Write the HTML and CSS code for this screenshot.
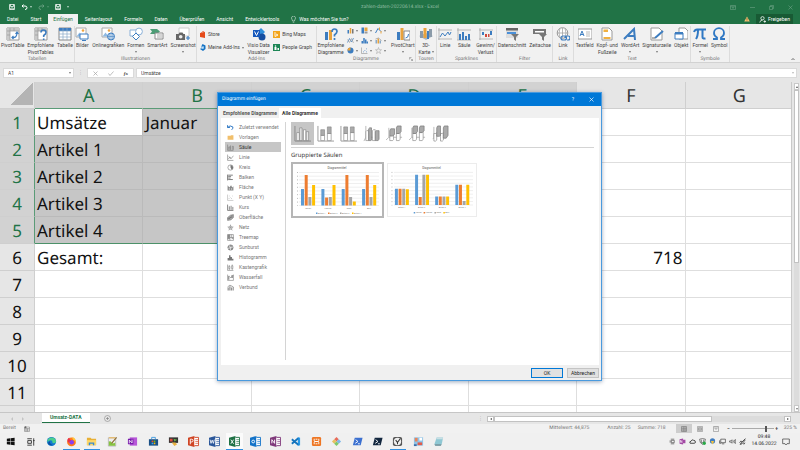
FILE: index.html
```html
<!DOCTYPE html>
<html lang="de">
<head>
<meta charset="utf-8">
<meta name="viewport" content="width=device-width, initial-scale=1">
<title>zahlen-daten-20220614.xlsx - Excel</title>
<link rel="stylesheet" href="styles.css">
</head>
<body>
<svg class="sprite" aria-hidden="true">
  <symbol id="save" viewBox="0 0 12 12"><path d="M1 1h10v10H1zM3 1v4h6V1M3.500 11V8h5v3" fill="none" stroke="#fff" stroke-width="1.500"/></symbol>
  <symbol id="docgrid" viewBox="0 0 14 14"><path d="M1 1h12v12H1z" fill="#fff" stroke="#999"/><path d="M1 1h12v3H1zM1 4h3v9H1z" fill="#c9c9c9"/><path d="M4 1v12M8 1v3M1 4h12M1 8h3" stroke="#999" stroke-width=".7"/></symbol>
  <symbol id="picture" viewBox="0 0 14 14"><path d="M1 1h10v9H1z" fill="#fff" stroke="#aaa"/><circle cx="8" cy="3.500" r="1.300" fill="#f0a33c"/><path d="M1.500 9.500l3-4 3 4z" fill="#8fb9e2"/></symbol>
  <symbol id="colbars" viewBox="0 0 14 14"><path d="M1 6h3v7H1z" fill="#3d7dc0"/><path d="M5.500 2h3v11h-3z" fill="#e9a23b"/><path d="M10 4h3v9h-3z" fill="#777"/></symbol>
  <symbol id="letterbox" viewBox="0 0 12 12"><path d="M0 2l7-2v12l-7-2z"/><path d="M7 1.500h4.500v9H7" fill="#fff" stroke="currentColor"/><path d="M8 4h3M8 6h3M8 8h3" stroke="currentColor" stroke-width=".7"/></symbol>
</svg>

<header class="top">
  <div class="titlebar">
    <div class="qat">
      <button aria-label="Speichern"><svg width="6" height="6"><use href="#save"/></svg></button>
      <button aria-label="Rückgängig"><svg width="7" height="6" viewBox="0 0 14 12"><path d="M5 1L2 4l3 3M2 4h6q4 0 4 3.500T8 11" fill="none" stroke="#fff" stroke-width="2"/></svg><i class="caret"></i></button>
      <button class="dim" aria-label="Wiederholen"><svg width="7" height="6" viewBox="0 0 14 12"><path d="M9 1l3 3-3 3M12 4H6Q2 4 2 7.500T6 11" fill="none" stroke="#fff" stroke-width="2"/></svg><i class="caret"></i></button>
      <button aria-label="Speichern unter"><svg width="6" height="6"><use href="#save"/></svg></button>
      <button aria-label="Anpassen"><i class="caret"></i></button>
    </div>
    <h1 class="doc-title">zahlen-daten-20220614.xlsx - Excel</h1>
    <div class="winbtns">
      <button aria-label="Menüband"><svg width="6" height="5" viewBox="0 0 12 10"><path d="M1 1h10v8H1zM1 3.500h10M6 5v3M4.500 6L6 4.500 7.500 6" fill="none" stroke="#fff"/></svg></button>
      <button aria-label="Minimieren"><svg width="5" height="5" viewBox="0 0 10 10"><path d="M0 5h10" stroke="#fff"/></svg></button>
      <button aria-label="Wiederherstellen"><svg width="5" height="5" viewBox="0 0 10 10"><path d="M1 3h6v6H1zM3 3V1h6v6H7" fill="none" stroke="#fff"/></svg></button>
      <button aria-label="Schließen"><svg width="5" height="5" viewBox="0 0 10 10"><path d="M1 1l8 8M9 1L1 9" stroke="#fff"/></svg></button>
    </div>
  </div>
  <nav class="tabs">
    <button>Datei</button><button>Start</button><button class="active">Einfügen</button><button>Seitenlayout</button><button>Formeln</button><button>Daten</button><button>Überprüfen</button><button>Ansicht</button><button>Entwicklertools</button>
    <button class="tell"><svg width="5" height="7" viewBox="0 0 10 14"><path d="M3 10Q3 8 1.800 6.500A4 4 0 1 1 8.200 6.500Q7 8 7 10zM3.500 12.500h3" fill="none" stroke="#fff"/></svg>Was möchten Sie tun?</button>
    <span class="warn"><svg width="6" height="6" viewBox="0 0 12 12"><path d="M6 1l5.500 10H.5z" fill="#f3c277"/><path d="M6 4v4M6 9v1.300" stroke="#6b4a12" stroke-width="1.300"/></svg></span>
    <button class="share"><svg width="7" height="7" viewBox="0 0 14 14"><circle cx="7" cy="4.500" r="3.300" fill="none" stroke="#fff" stroke-width="1.500"/><path d="M1.500 13q1-5 5.500-5M9 11h5M11.500 8.500v5" fill="none" stroke="#fff" stroke-width="1.500"/></svg>Freigeben</button>
  </nav>
</header>

<section class="ribbon" aria-label="Einfügen">
  <div class="group">
    <div class="items">
      <button class="big"><svg viewBox="0 0 14 14"><use href="#docgrid"/><path d="M6 10.500q5 1 5-5M9.500 7L11 5l1.500 2M7.500 9L6 10.500 7.500 12" fill="none" stroke="#3d7dc0" stroke-width="1.200"/></svg>PivotTable</button>
      <button class="big"><svg viewBox="0 0 14 14"><use href="#docgrid"/><path d="M7 5.500Q7 3 9.500 3T12 5.500Q12 7 9.700 8.500V10M9.700 11.500V13" fill="none" stroke="#3d7dc0" stroke-width="1.600"/></svg>Empfohlene<br>PivotTables</button>
      <button class="big"><svg viewBox="0 0 14 14"><path d="M1 1h12v12H1z" fill="#fff" stroke="#888"/><path d="M1 1h12v3H1z" fill="#3d7dc0"/><path d="M5 1v12M9 1v12M1 4h12M1 7h12M1 10h12" stroke="#8aa9c8" stroke-width=".7"/></svg>Tabelle</button>
    </div>
    <h2>Tabellen</h2>
  </div>
  <div class="group">
    <div class="items">
      <button class="big"><svg viewBox="0 0 14 14"><use href="#picture"/><path d="M5 7h8v5H5z" fill="#fff" stroke="#3d7dc0"/><path d="M7 13.500h4" stroke="#3d7dc0"/></svg>Bilder</button>
      <button class="big"><svg viewBox="0 0 14 14"><use href="#picture"/><circle cx="10" cy="9.500" r="3.500" fill="#e4eef8" stroke="#3d7dc0"/><path d="M6.500 9.500h7M10 6v7M8.500 6.500q-1 3 0 6M11.500 6.500q1 3 0 6" fill="none" stroke="#3d7dc0" stroke-width=".6"/></svg>Onlinegrafiken</button>
      <button class="big"><svg viewBox="0 0 14 14"><path d="M1 3h7v6H1z" fill="#fff" stroke="#8ab0d8"/><circle cx="10" cy="4.500" r="3.400" fill="#fff" stroke="#8ab0d8"/><path d="M7 6l3.500 3.500L7 13l-3.500-3.500z" fill="#fff" stroke="#3d7dc0"/></svg>Formen<i class="caret"></i></button>
      <button class="big"><svg viewBox="0 0 14 14"><path d="M0 2h7l3 2.500L7 7H0l2-2.500z" fill="#4d9d76"/><path d="M5 6h8v6H5z" fill="#fff" stroke="#888"/><path d="M7 8h5M7 10h5" stroke="#888" stroke-width=".7"/></svg>SmartArt</button>
      <button class="big"><svg viewBox="0 0 14 14"><path d="M3 1h10v8H3z" fill="#fff" stroke="#ccc"/><path d="M0 7h2.500l1-1.500h3L7.500 7H9v6H0z" fill="#666"/><circle cx="4.700" cy="9.800" r="1.800" fill="#eee"/><path d="M12 9v4M10 11h4" stroke="#3d7dc0" stroke-width="1.200"/></svg>Screenshot<i class="caret"></i></button>
    </div>
    <h2>Illustrationen</h2>
  </div>
  <div class="group">
    <div class="items addins">
      <div class="stack">
        <button class="line"><svg width="6" height="7" viewBox="0 0 12 14"><path d="M0 4l10-2v12L0 12z" fill="#e64a19"/><path d="M3 4Q4 0 8 1.500L8 5" fill="none" stroke="#e64a19" stroke-width="1.500"/></svg>Store</button>
        <button class="line"><svg width="6" height="7" viewBox="0 0 12 14"><path d="M5 0l6 3v7l-5 4-6-4 3-2V4z" fill="#1472c4"/><path d="M3 6l4-2 1 5-5 1z" fill="#bfe0f5"/></svg>Meine Add-Ins <i class="caret"></i></button>
      </div>
      <button class="big"><svg viewBox="0 0 14 14"><path d="M9 1l4 4-4 4-4-4z" fill="#2f8fdb"/><circle cx="10" cy="10" r="3.500" fill="#164fa0"/><path d="M1 3h7v7H1z" fill="#185abd"/><path d="M2.500 4.500l2 4 2-4" fill="none" stroke="#fff"/></svg>Visio Data<br>Visualizer</button>
      <div class="stack">
        <button class="line"><svg width="7" height="7" viewBox="0 0 14 14"><path d="M0 0h14v14H0z" fill="#f3a51c"/><path d="M4 2v9l6-3-4-2" fill="none" stroke="#fff" stroke-width="1.700"/></svg>Bing Maps</button>
        <button class="line"><svg width="7" height="7" viewBox="0 0 14 14"><path d="M0 0h14v14H0z" fill="#1d8655"/><circle cx="5" cy="4" r="1.500" fill="#fff"/><path d="M3 6h4v6H3zM9 8h3v4H9z" fill="#fff"/></svg>People Graph</button>
      </div>
    </div>
    <h2>Add-Ins</h2>
  </div>
  <div class="group">
    <div class="items">
      <button class="big"><svg viewBox="0 0 14 14"><path d="M1 5h3v8H1z" fill="#3d7dc0"/><path d="M5 3h3v10H5z" fill="#e9a23b"/><path d="M8 5Q8 2 10.500 2T13 4.500Q13 6 10.500 8v1.500M10.500 11v2" fill="none" stroke="#3d7dc0" stroke-width="1.700"/></svg>Empfohlene<br>Diagramme</button>
      <div class="minis">
        <button aria-label="Säule"><svg viewBox="0 0 14 14"><use href="#colbars"/></svg><i class="caret"></i></button>
        <button aria-label="Hierarchie"><svg viewBox="0 0 14 14"><path d="M1 1h5v12H1z" fill="#3d7dc0"/><path d="M7 1h6v7H7z" fill="#e9a23b"/><path d="M7 9h6v4H7z" fill="#999"/></svg><i class="caret"></i></button>
        <button aria-label="Wasserfall"><svg viewBox="0 0 14 14"><path d="M1 12L6 3l6 6" fill="none" stroke="#3d7dc0" stroke-width="2"/><path d="M9 1v5M12 8v5" stroke="#e9a23b" stroke-width="2"/></svg><i class="caret"></i></button>
        <button aria-label="Linie"><svg viewBox="0 0 14 14"><path d="M1 11L5 3l4 7 4-8" fill="none" stroke="#3d7dc0" stroke-width="1.500"/><path d="M1 5l4 6 4-8 4 9" fill="none" stroke="#999" stroke-width="1.200"/></svg><i class="caret"></i></button>
        <button aria-label="Statistik"><svg viewBox="0 0 14 14"><path d="M1 8h3v5H1zM4.500 2h3v11h-3zM8 5h3v8H8zM11.500 9H14v4h-2.500z" fill="#3d7dc0"/></svg><i class="caret"></i></button>
        <button aria-label="Verbund"><svg viewBox="0 0 14 14"><path d="M1 6h3v7H1zM9 7h3v6H9z" fill="#8aa9c8"/><path d="M5 3h3v10H5z" fill="#e9a23b"/><path d="M1 4l6-2 6 5" fill="none" stroke="#777"/></svg><i class="caret"></i></button>
        <button aria-label="Kreis"><svg viewBox="0 0 14 14"><circle cx="7" cy="7" r="6" fill="#3d7dc0"/><path d="M7 7V1a6 6 0 0 0-6 6z" fill="#e9a23b"/></svg><i class="caret"></i></button>
        <button aria-label="Punkt"><svg viewBox="0 0 14 14"><path d="M1 1v12h12" fill="none" stroke="#999" stroke-width="1.300"/><path d="M4 9h1.500v1.500H4zM7 6h1.500v1.500H7zM10 9h1.500v1.500H10zM10 3h1.500v1.500H10z" fill="#3d7dc0"/></svg><i class="caret"></i></button>
        <button aria-label="Netz"><svg viewBox="0 0 14 14"><path d="M7 1l1.500 4.500H13L9.500 8.500 11 13 7 10.500 3 13l1.500-4.500L1 5.500h4.500z" fill="none" stroke="#aaa" stroke-width="1.200"/></svg><i class="caret"></i></button>
      </div>
      <button class="big"><svg viewBox="0 0 14 14"><path d="M1 5h3v8H1z" fill="#3d7dc0"/><path d="M4.500 1h3v12h-3z" fill="#e9a23b"/><path d="M8 4h6v9H8z" fill="#fff" stroke="#888"/><path d="M9.500 11q3 0 3-4" fill="none" stroke="#3d7dc0"/></svg>PivotChart<i class="caret"></i></button>
    </div>
    <h2>Diagramme</h2><button class="launcher" aria-label="Optionen"><svg width="4" height="4" viewBox="0 0 8 8"><path d="M1 5V1h4M3 3l4 4M7 4v3H4" fill="none" stroke="#777"/></svg></button>
  </div>
  <div class="group">
    <div class="items">
      <button class="big"><svg viewBox="0 0 14 14"><path d="M0 9l7-3 7 3-7 4z" fill="#aab6c0"/><path d="M1 4h3v7H1zM10 2h3v8h-3z" fill="#8a9aa8"/><path d="M4.500 1h3v10h-3z" fill="#e9a23b"/><path d="M8 4h2v8H8z" fill="#3d7dc0"/></svg>3D-<br>Karte <i class="caret"></i></button>
    </div>
    <h2>Touren</h2>
  </div>
  <div class="group">
    <div class="items wide">
      <button class="big"><svg viewBox="0 0 14 14"><path d="M1 1v12M0 3h14M0 12h14" stroke="#aaa" stroke-width=".8"/><path d="M2 10l2.500-4L7 9l3-4 1.500 3L13 5" fill="none" stroke="#3d7dc0"/></svg>Linie</button>
      <button class="big"><svg viewBox="0 0 14 14"><path d="M0 3h14M0 13h14M1 1v12" stroke="#aaa" stroke-width=".8"/><path d="M2 7h2v6H2zM5 5h2v8H5zM8 9h2v4H8zM11 7h2v6h-2z" fill="#3d7dc0"/></svg>Säule</button>
      <button class="big"><svg viewBox="0 0 14 14"><path d="M0 3h14M0 12h14M1 1v12" stroke="#aaa" stroke-width=".8"/><path d="M3 5h2v3H3zM11 4h2v4h-2z" fill="#3d7dc0"/><path d="M6 7h2v3H6zM9 7h1.500v3H9z" fill="#d0483c"/></svg>Gewinn/<br>Verlust</button>
    </div>
    <h2>Sparklines</h2>
  </div>
  <div class="group">
    <div class="items">
      <button class="big"><svg viewBox="0 0 14 14"><path d="M1 1h12v10H1z" fill="#ddd"/><path d="M1 1h12v2.500H1z" fill="#666"/><path d="M2 5h9v2H2z" fill="#4a90d9"/><path d="M6 7h8l-3 3v4l-2-1.500V10z" fill="#777"/></svg>Datenschnitt</button>
      <button class="big"><svg viewBox="0 0 14 14"><path d="M0 2h13v5H0z" fill="#777"/><path d="M2 4h9v1.500H2z" fill="#fff"/><path d="M6 7h8l-3 3v4l-2-1.500V10z" fill="#777"/></svg>Zeitachse</button>
    </div>
    <h2>Filter</h2>
  </div>
  <div class="group">
    <div class="items">
      <button class="big"><svg viewBox="0 0 14 14"><circle cx="6.500" cy="6" r="5.300" fill="#fff" stroke="#999"/><path d="M1 6h11M6.500 1v10M4 1.500q-2 4.500 0 9M9 1.500q2 4.500 0 9" fill="none" stroke="#999" stroke-width=".7"/><path d="M5 11q0-2 2-2h1.500q2 0 2 2t-2 2H7q-2 0-2-2zM9 11q0-2 2-2h1q2 0 2 2t-2 2h-1" fill="none" stroke="#3d7dc0" stroke-width="1.200"/></svg>Link</button>
    </div>
    <h2>Link</h2>
  </div>
  <div class="group">
    <div class="items">
      <button class="big"><svg viewBox="0 0 14 14"><path d="M0 2h14v10H0z" fill="#fff" stroke="#999"/><path d="M2 9l2-5 2 5M2.700 7.500h2.600" fill="none" stroke="#3d7dc0"/><path d="M8 5h4M8 7h4M8 9h4" stroke="#aaa" stroke-width=".8"/></svg>Textfeld</button>
      <button class="big"><svg viewBox="0 0 14 14"><path d="M2 1h7l3 3v9H2z" fill="#fff" stroke="#999"/><path d="M3.500 2.500H8v2.500H3.500zM3.500 10h7v2h-7z" fill="#f0b040"/></svg>Kopf- und<br>Fußzeile</button>
      <button class="big"><svg viewBox="0 0 14 14"><path d="M1 12L11 2l1 11M5 9h7" fill="none" stroke="#3d7dc0" stroke-width="2"/></svg>WordArt<i class="caret"></i></button>
      <button class="big"><svg viewBox="0 0 14 14"><path d="M1 1h8l3 3v9H1z" fill="#fff" stroke="#999"/><path d="M5 11l8-7" stroke="#3d7dc0" stroke-width="2"/><path d="M2 11h3" stroke="#666"/></svg>Signaturzeile<i class="caret"></i></button>
      <button class="big"><svg viewBox="0 0 14 14"><path d="M5 1h6l3 3v8H5z" fill="#fff" stroke="#999"/><path d="M1 6h8v6H1z" fill="#fff" stroke="#3d7dc0"/><path d="M1 5h8v2.500H1z" fill="#3d7dc0"/></svg>Objekt</button>
    </div>
    <h2>Text</h2>
  </div>
  <div class="group">
    <div class="items">
      <button class="big"><svg viewBox="0 0 14 14"><path d="M1 5q1-2.500 3-2.500h9M5 3q0 6-2 9M9.500 3v7q0 2 3 1.500" fill="none" stroke="#2f78c4" stroke-width="2"/></svg>Formel<i class="caret"></i></button>
      <button class="big"><svg viewBox="0 0 14 14"><path d="M1 12h4v-1.500Q2 9 2 6a5 4.800 0 0 1 10 0q0 3-3 4.500V12h4" fill="none" stroke="#2f78c4" stroke-width="1.800"/></svg>Symbol</button>
    </div>
    <h2>Symbole</h2>
  </div>
  <div class="group last"><button class="launcher" aria-label="Menüband reduzieren"><svg width="4" height="4" viewBox="0 0 8 8"><path d="M1 6l3-3 3 3" fill="none" stroke="#444" stroke-width="1.500"/></svg></button></div>
</section>

<div class="formulabar">
  <div class="namebox"><input aria-label="Namenfeld" value="A1"><i class="caret"></i></div>
  <span class="dots">⋮</span>
  <div class="fx">
    <button aria-label="Abbrechen"><svg width="5" height="5" viewBox="0 0 10 10"><path d="M1 1l8 8M9 1L1 9" stroke="#aaa" stroke-width="1.500"/></svg></button>
    <button aria-label="Eingeben"><svg width="6" height="5" viewBox="0 0 12 10"><path d="M1 5l3 4 7-8" fill="none" stroke="#aaa" stroke-width="1.500"/></svg></button>
    <button class="fxb"><i>f</i>x</button>
  </div>
  <div class="formula"><input aria-label="Bearbeitungsleiste" value="Umsätze"><i class="caret pale"></i></div>
</div>

<main class="sheet">
  <div class="gridwrap">
    <table class="grid">
      <colgroup><col class="rowcol"><col><col><col><col><col><col><col></colgroup>
      <thead><tr><th class="corner"></th><th class="on">A</th><th class="on">B</th><th class="on">C</th><th class="on">D</th><th class="on">E</th><th>F</th><th>G</th></tr></thead>
      <tbody>
        <tr class="sel"><th>1</th><td class="cur">Umsätze</td><td>Januar</td><td></td><td></td><td></td><td></td><td></td></tr>
        <tr class="sel"><th>2</th><td>Artikel 1</td><td></td><td></td><td></td><td></td><td></td><td></td></tr>
        <tr class="sel"><th>3</th><td>Artikel 2</td><td></td><td></td><td></td><td></td><td></td><td></td></tr>
        <tr class="sel"><th>4</th><td>Artikel 3</td><td></td><td></td><td></td><td></td><td></td><td></td></tr>
        <tr class="sel end"><th>5</th><td>Artikel 4</td><td></td><td></td><td></td><td></td><td></td><td></td></tr>
        <tr><th>6</th><td>Gesamt:</td><td></td><td></td><td></td><td></td><td class="num">718</td><td></td></tr>
        <tr><th>7</th><td></td><td></td><td></td><td></td><td></td><td></td><td></td></tr>
        <tr><th>8</th><td></td><td></td><td></td><td></td><td></td><td></td><td></td></tr>
        <tr><th>9</th><td></td><td></td><td></td><td></td><td></td><td></td><td></td></tr>
        <tr><th>10</th><td></td><td></td><td></td><td></td><td></td><td></td><td></td></tr>
        <tr><th>11</th><td></td><td></td><td></td><td></td><td></td><td></td><td></td></tr>
        <tr><th></th><td></td><td></td><td></td><td></td><td></td><td></td><td></td></tr>
      </tbody>
    </table>
  </div>
  <div class="vscroll"><button aria-label="Nach oben"><i class="up"></i></button><div class="vthumb"></div><div class="vtrack"></div><button aria-label="Nach unten"><i class="caret"></i></button></div>
</main>

<div class="sheetbar">
  <span class="navs"><i class="leftt"></i><i class="rightt"></i></span>
  <button class="sheettab">Umsatz-DATA</button>
  <button class="plus" aria-label="Neues Blatt"><svg width="7" height="7" viewBox="0 0 14 14"><circle cx="7" cy="7" r="6" fill="none" stroke="#777"/><path d="M7 4v6M4 7h6" stroke="#777" stroke-width="1.200"/></svg></button>
  <span class="dots">⋮</span>
  <div class="hscroll"><button aria-label="Nach links"><i class="leftt dark"></i></button><div class="hthumb"></div><div class="htrack"></div><button aria-label="Nach rechts"><i class="rightt dark"></i></button></div>
</div>

<div class="status">
  <span>Bereit</span>
  <svg class="rec" width="6" height="6" viewBox="0 0 12 12"><path d="M1 2h10v9H1zM1 5h10M4 5v6M7 5v6M1 8h10" fill="none" stroke="#777"/><circle cx="3" cy="2.500" r="2" fill="#666"/></svg>
  <span class="mw">Mittelwert: 44,875</span><span class="az">Anzahl: 25</span><span class="sm">Summe: 718</span>
  <button class="view on" aria-label="Normal"><svg width="6" height="6" viewBox="0 0 12 12"><path d="M1 1h10v10H1zM4.500 1v10M8 1v10M1 4.500h10M1 8h10" fill="none" stroke="#666"/></svg></button>
  <button class="view" aria-label="Seitenlayout"><svg width="6" height="6" viewBox="0 0 12 12"><path d="M1 1h10v10H1zM3 3h6v6H3zM3 5h6M3 7h6" fill="none" stroke="#777"/></svg></button>
  <button class="view" aria-label="Umbruchvorschau"><svg width="6" height="6" viewBox="0 0 12 12"><path d="M1 1h10v10H1zM4 1v5h4V1" fill="none" stroke="#777"/></svg></button>
  <button class="zb">−</button><input class="zoom" type="range" min="10" max="400" value="335" aria-label="Zoom"><button class="zb">+</button>
  <span class="pct">325 %</span>
</div>

<footer class="taskbar">
  <div class="apps">
    <button aria-label="Start"><svg viewBox="0 0 12 12"><path d="M2 3l3.700-.5v3.200H2zM6.200 2.400L10.500 2v3.700H6.200zM2 6.300h3.700v3.200L2 9zM6.200 6.300h4.300V10l-4.300-.5z" fill="#111"/></svg></button>
    <button aria-label="Taskansicht"><svg viewBox="0 0 12 12"><path d="M3 5h4v3H3zM2.500 3h5M2.500 10h5M9.500 2.500v8M9 5h1.500" fill="none" stroke="#222" stroke-width=".9"/></svg></button>
    <button aria-label="Edge"><svg viewBox="0 0 12 12"><circle cx="6" cy="6" r="5" fill="#1479cf"/><path d="M1.500 4.500A5 5 0 0 1 11 6q0 2-2.500 2Q6.500 8 7 6.500 7.300 4.500 5 4.500q-2.500 0-3.500 2.500z" fill="#4ccf8c"/><path d="M4.500 5.500q-1 3 3 4.500Q3 11 2 7.500z" fill="#0c4f9e"/></svg></button>
    <button class="run" aria-label="Firefox"><svg viewBox="0 0 12 12"><circle cx="6" cy="6.500" r="4.800" fill="#ff7a1e"/><circle cx="6.200" cy="6.800" r="2.500" fill="#8a3ff0"/><path d="M1.500 4q1-2 2-2 0 2 2 2.500-2 1-2 3Q1 6 1.500 4z" fill="#e8304a"/><path d="M7 1q4 1.500 3.800 6-1-2.500-3-3Q6.500 3 7 1z" fill="#ffc93c"/></svg></button>
    <button class="run" aria-label="Explorer"><svg viewBox="0 0 12 12"><path d="M1 2h4l1 1h5v7H1z" fill="#e8b036"/><path d="M1 4.500h10V10H1z" fill="#ffd767"/><path d="M3 7h6v3H7.500V8.500h-3V10H3z" fill="#3a8bd0"/></svg></button>
    <button aria-label="Notepad++"><svg viewBox="0 0 12 12"><path d="M1.500 2h8v9h-8z" fill="#eee" stroke="#999" stroke-width=".6"/><path d="M2 6q2-1 3 1t4 0v3.500H2z" fill="#86c440"/><path d="M10.500 1.500L5 8" stroke="#8a6a30" stroke-width="1.200"/><path d="M2 2h7" stroke="#f0b040"/></svg></button>
    <button aria-label="OneNote"><svg viewBox="0 0 12 12"><path d="M3 1.500h8v9H3z" fill="#b757d8"/><path d="M1 3h6v6H1z" fill="#7719aa"/><path d="M2.500 8V4.500l3 3V4" fill="none" stroke="#fff" stroke-width=".9"/></svg></button>
    <button aria-label="Store"><svg viewBox="0 0 12 12"><path d="M1 3.500h10v7H1z" fill="#194f86"/><path d="M4 3.500v-2h4v2" fill="none" stroke="#3f9be0"/><path d="M4 5h1.700v1.700H4z" fill="#f25022"/><path d="M6.300 5H8v1.700H6.300z" fill="#7fba00"/><path d="M4 7.300h1.700V9H4z" fill="#35a8f0"/><path d="M6.300 7.300H8V9H6.300z" fill="#ffb900"/></svg></button>
    <button aria-label="Monitor"><svg viewBox="0 0 12 12"><path d="M1 1.500h10v6H1z" fill="#333"/><path d="M2 3h3v3H2z" fill="#e14b3d"/><path d="M6 3l4 1-3 2z" fill="#6ab04a"/><path d="M4 7h4l2 2-3 2z" fill="#e8b040"/></svg></button>
    <button class="pp" aria-label="PowerPoint"><svg viewBox="0 0 12 12"><use href="#letterbox"/><path d="M2.500 9V3.500H4a1.500 1.500 0 0 1 0 3H2.500" fill="none" stroke="#fff"/></svg></button>
    <button class="wd" aria-label="Word"><svg viewBox="0 0 12 12"><use href="#letterbox"/><path d="M1.200 4l1 4 1.300-3.500L4.800 8l1-4" fill="none" stroke="#fff" stroke-width=".9"/></svg></button>
    <button class="xl run hl" aria-label="Excel"><svg viewBox="0 0 12 12"><use href="#letterbox"/><path d="M2 4l3 4.500M5 4L2 8.500" stroke="#fff"/></svg></button>
    <button class="ol" aria-label="Outlook"><svg viewBox="0 0 12 12"><use href="#letterbox"/><circle cx="3.500" cy="6" r="1.500" fill="none" stroke="#fff"/></svg></button>
    <button class="on16" aria-label="OneNote 2016"><svg viewBox="0 0 12 12"><use href="#letterbox"/><path d="M2 8V4l3 4V4" fill="none" stroke="#fff"/></svg></button>
    <button aria-label="Visual Studio Code"><svg viewBox="0 0 12 12"><path d="M8.500 1L11 2v8l-2.500 1z" fill="#2a9ae8"/><path d="M9 2.500L2 8.500M9 9.500L2 3.500" stroke="#1574bd" stroke-width="2"/></svg></button>
    <button aria-label="XAMPP"><svg viewBox="0 0 12 12"><rect x="1" y="1" width="10" height="10" rx="1.500" fill="#ee7623"/><path d="M3.500 3v2q0 1 1 1h3q1 0 1-1V3M3.500 9V7q0-1 1-1h3q1 0 1 1v2M5 3.500h2M5 8.500h2" fill="none" stroke="#fff"/></svg></button>
    <button aria-label="Git GUI"><svg viewBox="0 0 12 12"><path d="M6 1l2.500 2.500L6 6 3.500 3.500z" fill="#e86b5a"/><path d="M8.500 3.500L11 6 8.500 8.500 6 6z" fill="#7fb8e8"/><path d="M3.500 3.500L6 6 3.500 8.500 1 6z" fill="#e8c060"/><path d="M6 6l2.500 2.500L6 11 3.500 8.500z" fill="#7ec86a"/></svg></button>
    <button aria-label="PowerShell ISE"><svg viewBox="0 0 12 12"><path d="M3 2h8.500L9.500 10H1z" fill="#3c70d0"/><path d="M4 4l2.500 2L3.500 8M6.500 8.500h2" fill="none" stroke="#fff"/></svg></button>
    <button aria-label="PowerShell"><svg viewBox="0 0 12 12"><path d="M3 2h8.500L9.500 10H1z" fill="#12263e"/><path d="M4 4l2.500 2L3.500 8M6.500 8.500h2" fill="none" stroke="#fff"/></svg></button>
    <button class="run" aria-label="Aufgaben"><svg viewBox="0 0 12 12"><rect x="1" y="1" width="10" height="10" rx="2" fill="#555"/><circle cx="6" cy="6" r="4" fill="#eee"/><path d="M4 4.500L6 7l3-4M6 7v2" fill="none" stroke="#333" stroke-width="1.100"/></svg></button>
    <button aria-label="Speicher"><svg viewBox="0 0 12 12"><path d="M1 1.500h10v9H1z" fill="#8fc4e8"/><path d="M2 2h3v4H2z" fill="#e8845a"/><path d="M5 7h5v3H5z" fill="#e25b4a"/><path d="M7 2h3v3H7z" fill="#fff"/><path d="M1 9h3v2H1z" fill="#3b6fa8"/></svg></button>
    <button aria-label="Notizen"><svg viewBox="0 0 12 12"><path d="M4 1.500h7L9.500 9H1.500z" fill="#8fc8d4"/><path d="M4 1.500h7l-.5 2H3.500z" fill="#c9dfe4"/><path d="M1.500 9h8l-1 1.500h-6z" fill="#5f8a94"/></svg></button>
  </div>
  <div class="tray">
    <svg viewBox="0 0 12 12"><path d="M3 2h6M3 10h6M4 4h5v4H4zM2 4v4" fill="none" stroke="#333"/></svg>
    <svg viewBox="0 0 12 12"><path d="M1 2l6-1v10l-6-1zM7 3h4v6H7" fill="#a349a4"/><path d="M2.500 8V4L5 8V4" fill="none" stroke="#fff"/></svg>
    <svg viewBox="0 0 12 12"><path d="M2 9Q0 6 3.500 5.500 5 1.500 8 4q3 0 3 3 0 2-2 2z" fill="none" stroke="#333" stroke-width="1.500"/></svg>
    <svg viewBox="0 0 12 12"><path d="M1 2l5-1 5 1q0 7-5 9-5-2-5-9z" fill="none" stroke="#333"/><path d="M4 3v5h4V3" fill="none" stroke="#333"/><circle cx="9" cy="9" r="2.800" fill="#28a745"/></svg>
    <svg viewBox="0 0 12 12"><circle cx="6" cy="5" r="4.500" fill="#3f7dc0"/><path d="M3 5h6l-3 6z" fill="#f0c040"/></svg>
    <svg viewBox="0 0 12 12"><path d="M3 2h8v6H3zM5 10h4M1 4v5h3" fill="none" stroke="#333" stroke-width="1.100"/></svg>
    <svg viewBox="0 0 12 12"><path d="M1 5h2l2-2v6L3 7H1zM7 4q1 2 0 4M9 3q1.500 3 0 6M11 2q1.500 4 0 8" fill="none" stroke="#333"/></svg>
    <svg viewBox="0 0 12 12"><path d="M11 1L4 8l-2 3 3-1 6-7M1 8q2-4 4-2M7 10q3 1 3-2" fill="none" stroke="#222" stroke-width="1.300"/></svg>
  </div>
  <time class="clock">09:48<br>14.06.2022</time>
  <button class="notif" aria-label="Benachrichtigungen"><svg width="8" height="8" viewBox="0 0 12 12"><path d="M1 1.500h10v7H7.500L6 10.500 4.500 8.500H1z" fill="none" stroke="#333"/></svg></button>
</footer>

<section class="dialog" role="dialog" aria-label="Diagramm einfügen">
  <header class="dhead"><span>Diagramm einfügen</span><button aria-label="Hilfe">?</button><button aria-label="Schließen"><svg width="5" height="5" viewBox="0 0 10 10"><path d="M1 1l8 8M9 1L1 9" stroke="#fff" stroke-width="1.300"/></svg></button></header>
  <nav class="dtabs"><button>Empfohlene Diagramme</button><button class="active">Alle Diagramme</button></nav>
  <div class="dbody">
    <div class="kinds">
      <button><svg viewBox="0 0 12 12"><path d="M1 2v4h4M1 6q4-5 9-1 1 2-2 5" fill="none" stroke="#2f78c4" stroke-width="1.700"/></svg>Zuletzt verwendet</button>
      <button><svg viewBox="0 0 12 12"><path d="M1 3h5l1-1h4v8H1z" fill="#f1bf6b"/></svg>Vorlagen</button>
      <button class="active"><svg viewBox="0 0 12 12"><path d="M1 1v10h10M3 10V5h2v5M6 10V3h1M9 10V4h2v6" fill="none" stroke="#777"/></svg>Säule</button>
      <button><svg viewBox="0 0 12 12"><path d="M1 1v10h10M2 9l3-4 2 3 4-5M3 4l3 4" fill="none" stroke="#777"/></svg>Linie</button>
      <button><svg viewBox="0 0 12 12"><circle cx="6" cy="6" r="4.500" fill="none" stroke="#777"/><path d="M6 6V1.500A4.500 4.500 0 0 1 8 10z" fill="#777"/></svg>Kreis</button>
      <button><svg viewBox="0 0 12 12"><path d="M1 1v10M2 2h8M2 4.500h5M2 7h4M2 9.500h8" fill="none" stroke="#777" stroke-width="1.600"/></svg>Balken</button>
      <button><svg viewBox="0 0 12 12"><path d="M1 11V2l3 4 3-4 2 4 2-2v7z" fill="#888"/><path d="M4 10V7M8 10V7" stroke="#fff"/></svg>Fläche</button>
      <button><svg viewBox="0 0 12 12"><path d="M1 1v10h10" fill="none" stroke="#aaa"/><path d="M3 7h1v1H3zM5 5h1v1H5zM7 7h1v1H7zM9 3h1v1H9zM4 3h1v1H4z" fill="#999"/></svg>Punkt (X Y)</button>
      <button><svg viewBox="0 0 12 12"><path d="M1 1v10h10M4 4v6M7 3v7M10 5v5" fill="none" stroke="#777" stroke-width="1.500"/></svg>Kurs</button>
      <button><svg viewBox="0 0 12 12"><path d="M1 6l5-4 5-1v5l-4 4-6 1z" fill="#aaa" stroke="#777"/><path d="M3 9l6-7M1 8l9-3" stroke="#666"/></svg>Oberfläche</button>
      <button><svg viewBox="0 0 12 12"><path d="M6 1v5l5-1M6 6L1 5M6 6l3 5M6 6l-3 5M6 3l3 2-1 4H4L3 5z" fill="none" stroke="#888"/></svg>Netz</button>
      <button><svg viewBox="0 0 12 12"><path d="M1 1h10v10H1zM5 1v10M5 6h6M8 1v5M1 8h4" fill="none" stroke="#777"/><path d="M1 1h4v7H1zM8 6h3v2H8z" fill="#888"/></svg>Treemap</button>
      <button><svg viewBox="0 0 12 12"><circle cx="6" cy="6" r="4.500" fill="#999" stroke="#666"/><path d="M6 6L3 2M6 6v5M6 6l5-1M6 6l-5 2" stroke="#fff"/></svg>Sunburst</button>
      <button><svg viewBox="0 0 12 12"><path d="M1 7h2.500v4H1zM3.500 2H6v9H3.500zM6 5h2.500v6H6zM8.500 8H11v3H8.500z" fill="#777"/></svg>Histogramm</button>
      <button><svg viewBox="0 0 12 12"><path d="M1 1v10h10M3 4h2v4H3zM8 3h2v5H8zM4 2v2M4 8v2M9 1v2M9 8v2" fill="none" stroke="#777"/></svg>Kastengrafik</button>
      <button><svg viewBox="0 0 12 12"><path d="M1 1v10h10V1M2 4h3M5 6h3V3h3" fill="none" stroke="#777"/><path d="M2 4h2v6H2zM8 2h2v5H8z" fill="#888"/></svg>Wasserfall</button>
      <button><svg viewBox="0 0 12 12"><path d="M1 6h2v5H1zM4 4h2v7H4zM7 6h2v5H7zM10 5h1.500v6H10z" fill="#888"/><path d="M1 5l4-3 6 3" fill="none" stroke="#666"/></svg>Verbund</button>
    </div>
    <div class="preview">
      <div class="types">
        <button class="active" aria-label="Gruppierte Säulen"><svg viewBox="0 0 18 18"><path d="M1 1v16h17" fill="none" stroke="#888"/><path d="M3 16.500V8h2.500v8.500zM10 16.500V5h2.500v11.500z" fill="#fff" stroke="#777" stroke-width=".6"/><path d="M6 16.500V3h2.500v13.500zM13 16.500V7h2.500v9.500z" fill="#e8e8e8" stroke="#777" stroke-width=".6"/></svg></button>
        <button aria-label="Gestapelte Säulen"><svg viewBox="0 0 18 18"><path d="M1 1v16h17" fill="none" stroke="#999"/><path d="M4 11h4v5.500H4zM11 9h4v7.500h-4z" fill="#fff" stroke="#888" stroke-width=".7"/><path d="M4 5h4v6H4zM11 2h4v7h-4z" fill="#aaa" stroke="#888" stroke-width=".7"/></svg></button>
        <button aria-label="Gestapelte Säulen (100%)"><svg viewBox="0 0 18 18"><path d="M1 1v16h17" fill="none" stroke="#999"/><path d="M4 9h4v7.500H4zM11 8h4v8.500h-4z" fill="#fff" stroke="#888" stroke-width=".7"/><path d="M4 2h4v7H4zM11 2h4v6h-4z" fill="#aaa" stroke="#888" stroke-width=".7"/></svg></button>
        <button aria-label="3D-Säulen (gruppiert)"><svg viewBox="0 0 18 18"><path d="M3 1v12l-2 4M3 13h14" fill="none" stroke="#999" stroke-width=".7"/><path d="M3 16.500V7l1-1h2v10.500zM10 16.500V6l1-1h2v11.500z" fill="#fff" stroke="#888" stroke-width=".7"/><path d="M6 16.500V4l1-1h2v13l-.5.500zM13 16.500V7l1-1h3v9l-1 1.500z" fill="#aaa" stroke="#777" stroke-width=".7"/></svg></button>
        <button aria-label="Gestapelte 3D-Säulen"><svg viewBox="0 0 18 18"><path d="M3 3v10l-3 3M3 13h14" fill="none" stroke="#999" stroke-width=".7"/><path d="M4 16.500v-5h3l1-1v5l-1 1zM11 16.500V9h3l1-1v7l-1 1.500z" fill="#fff" stroke="#888" stroke-width=".7"/><path d="M4 11.500V6l1-2h4v6l-2 1.500zM11 9V3l1-2h4v6l-2 2z" fill="#aaa" stroke="#777" stroke-width=".7"/></svg></button>
        <button aria-label="Gestapelte 3D-Säulen (100%)"><svg viewBox="0 0 18 18"><path d="M3 3v10l-3 3M3 13h14" fill="none" stroke="#999" stroke-width=".7"/><path d="M4 16.500V9h3l1-1v7l-1 1.500zM11 16.500V8h3l1-1v8l-1 1.500z" fill="#fff" stroke="#888" stroke-width=".7"/><path d="M4 9V3l1-2h4v6L7 9zM11 8V3l1-2h4v5l-2 2z" fill="#aaa" stroke="#777" stroke-width=".7"/></svg></button>
        <button aria-label="3D-Säulen"><svg viewBox="0 0 18 18"><path d="M2 2v11l-1 2M2 11h14" fill="none" stroke="#999" stroke-width=".7"/><path d="M2 17V9h2l1-1v8l-1 1zM9 17V9h2l1-1v8l-1 1z" fill="#fff" stroke="#888" stroke-width=".7"/><path d="M5 12V3l1-2h3v10l-1 1zM12 12V3l1-2h4v10l-2 3h-3z" fill="#aaa" stroke="#777" stroke-width=".7"/></svg></button>
      </div>
      <h2>Gruppierte Säulen</h2>
      <div class="charts">
        <button class="chart active"><svg viewBox="0 0 89 52">
          <path class="gl" d="M6 8.500h80M6 12.200h80M6 15.900h80M6 19.500h80M6 23.200h80M6 26.900h80M6 30.500h80M6 34.200h80M6 37.900h80M6 41.500h80"/>
          <path class="ticks" d="M4.500 8v34"/>
          <path class="c1" d="M9.500 41.500V25M29.900 41.500V25M50.200 41.500V25M70.600 41.500V25"/>
          <path class="c2" d="M13.200 41.500V11M33.600 41.500V33.500M53.900 41.500V11M74.300 41.500V11"/>
          <path class="c3" d="M16.900 41.500V33M37.300 41.500V33M57.600 41.500V33M78 41.500V33"/>
          <path class="c4" d="M20.600 41.500V21M41 41.500V21M61.300 41.500V37.500M81.700 41.500V21"/>
          <text class="ct" x="44" y="5">Diagrammtitel</text>
          <g class="lab"><text x="15" y="45">Januar</text><text x="35" y="45">Februar</text><text x="56" y="45">März</text><text x="76" y="45">April</text></g>
          <g class="leg"><text x="25" y="50">Artikel 1</text><text x="37" y="50">Artikel 2</text><text x="49" y="50">Artikel 3</text><text x="61" y="50">Artikel 4</text></g>
          <path d="M23 49.300h1.500" stroke="#5b9bd5" stroke-width="1.500"/><path d="M35 49.300h1.500" stroke="#ed7d31" stroke-width="1.500"/><path d="M47 49.300h1.500" stroke="#a5a5a5" stroke-width="1.500"/><path d="M59 49.300h1.500" stroke="#ffc000" stroke-width="1.500"/>
        </svg></button>
        <button class="chart"><svg viewBox="0 0 89 52">
          <path class="gl" d="M6 8.500h80M6 12.200h80M6 15.900h80M6 19.500h80M6 23.200h80M6 26.900h80M6 30.500h80M6 34.200h80M6 37.900h80M6 41.500h80"/>
          <path class="ticks" d="M4 8v34"/>
          <path class="c1" d="M8.500 41.500V25M28.900 41.500V11M49.200 41.500V33M69.600 41.500V21"/>
          <path class="c2" d="M12.200 41.500V25M32.600 41.500V33.500M52.900 41.500V33M73.300 41.500V21"/>
          <path class="c3" d="M15.900 41.500V25M36.300 41.500V11M56.600 41.500V33M77 41.500V37.500"/>
          <path class="c4" d="M19.600 41.500V25.500M40 41.500V11M60.300 41.500V33M80.700 41.500V21"/>
          <text class="ct" x="44" y="5">Diagrammtitel</text>
          <g class="lab"><text x="14" y="45">Artikel 1</text><text x="34" y="45">Artikel 2</text><text x="55" y="45">Artikel 3</text><text x="75" y="45">Artikel 4</text></g>
          <g class="leg"><text x="28" y="50">Januar</text><text x="38" y="50">Februar</text><text x="49" y="50">März</text><text x="58" y="50">April</text></g>
          <path d="M26 49.300h1.500" stroke="#5b9bd5" stroke-width="1.500"/><path d="M36 49.300h1.500" stroke="#ed7d31" stroke-width="1.500"/><path d="M47 49.300h1.500" stroke="#a5a5a5" stroke-width="1.500"/><path d="M56 49.300h1.500" stroke="#ffc000" stroke-width="1.500"/>
        </svg></button>
      </div>
    </div>
  </div>
  <footer class="dfoot"><button class="ok">OK</button><button>Abbrechen</button></footer>
</section>
</body>
</html>
```
FILE: styles.css
```css
* { box-sizing: border-box; }
body {
  margin: 0; height: 100vh; overflow: hidden; display: flex; flex-direction: column; position: relative;
  font: 5px/7px Roboto, "Open Sans", sans-serif; color: #444; background: #e6e6e6;
  text-rendering: geometricPrecision;
}
button, input { font: inherit; color: inherit; background: none; border: 0; padding: 0; margin: 0; min-width: 0; }
h1, h2 { font: inherit; margin: 0; }
svg { display: block; flex: none; }
.sprite { position: absolute; width: 0; height: 0; }
.caret, .up, .leftt, .rightt { display: inline-block; width: 0; height: 0; flex: none; border: 1px solid transparent; }
.caret { border-top: 2px solid #777; border-bottom: 0; }
.caret.pale { border-top-color: #bbb; }
.up { border-bottom: 2px solid #555; border-top: 0; }
.leftt { border: 2px solid transparent; border-right-color: #c4c4c4; border-left: 0; }
.rightt { border: 2px solid transparent; border-left-color: #c4c4c4; border-right: 0; }
.dark.leftt { border-width: 1px 2px 1px 0; border-right-color: #555; }
.dark.rightt { border-width: 1px 0 1px 2px; border-left-color: #555; }

/* title bar and ribbon tabs */
.top { background: #217346; color: #fff; }
.titlebar { height: 14px; display: grid; grid-template-columns: 1fr auto 1fr; align-items: center; }
.qat { display: flex; align-items: center; gap: 6px; padding-left: 9px; }
.qat button { display: flex; align-items: center; gap: 2px; }
.qat .caret { border-top-color: #b9d6c6; }
.dim { opacity: .3; }
.doc-title { color: #8fbca2; }
.winbtns { display: flex; justify-content: flex-end; gap: 14px; padding-right: 7px; opacity: .4; }
.tabs { display: flex; height: 10px; padding-left: 1px; }
.tabs button { padding: 0 6px; display: flex; align-items: center; gap: 3px; }
.tabs .active { background: #f1f1f1; color: #217346; padding: 0 5px; margin: 0 1px; }
.tabs .warn { margin-left: auto; padding: 2px 6px 0 0; }
.tabs .share { background: #185a34; padding: 0 3px; margin-right: 7px; gap: 2px; }

.ribbon {
  display: grid; grid-template-columns: 75px 122px 120px 99px 21px 60px 56px 21px 117px 39px 1fr;
  height: 39px; background: #f1f1f1; border-bottom: 1px solid #d2d2d2;
}
.group { position: relative; display: flex; flex-direction: column; justify-content: space-between; border-right: 1px solid #dcdcdc; margin-top: 2px; margin-bottom: 1px; }
.group.last { border: 0; margin-right: 3px; }
.group h2 { color: #777; text-align: center; line-height: 6px; }
.items { display: flex; justify-content: center; align-items: flex-start; gap: 3px; }
.items.wide { gap: 5px; }
.big { display: block; white-space: nowrap; text-align: center; line-height: 7px; }
.big svg { width: 14px; height: 14px; margin: 1px auto; }
.big > .caret { display: block; margin: 2px auto 0; }
.big br + .caret, .big br ~ .caret { display: inline-block; margin: 0 0 1px; }
.items.addins { justify-content: space-between; padding: 0 4px 0 3px; gap: 0; }
.stack { display: flex; flex-direction: column; gap: 6px; padding-top: 5px; }
.line { display: flex; align-items: center; gap: 2px; white-space: nowrap; }
.minis { display: grid; grid-template-columns: repeat(3, 13px); align-content: start; gap: 3px 1px; padding-top: 1px; }
.minis button { display: flex; align-items: center; gap: 2px; }
.minis svg { width: 7px; height: 7px; }
.launcher { position: absolute; right: 2px; bottom: 1px; }

/* formula bar */
.formulabar { display: flex; height: 19px; padding: 5px 3px 4px; gap: 2px; }
.namebox, .fx, .formula { background: #fff; border: 1px solid #dadada; display: flex; align-items: center; }
.namebox { width: 71px; padding: 0 2px; }
.namebox input, .formula input { flex: 1; padding-left: 2px; outline: 0; }
.dots { color: #999; width: 9px; text-align: center; line-height: 10px; }
.fx { width: 47px; justify-content: space-around; }
.fxb { font-family: "Liberation Serif", serif; font-style: italic; font-weight: bold; }
.formula { flex: 1; padding: 0 2px; }

/* cells */
.sheet { flex: 1; min-height: 0; display: flex; }
.gridwrap { flex: 1; min-width: 0; overflow: hidden; background: #fff; }
.grid { border-collapse: separate; border-spacing: 0; table-layout: fixed; width: 794px; font: 17px/24px "Noto Sans", sans-serif; color: #111; }
.grid .rowcol { width: 35px; }
.grid th { font-weight: 400; padding: 0; background: #e6e6e6; border-right: 1px solid #cfcfcf; border-bottom: 1px solid #cfcfcf; white-space: nowrap; overflow: hidden; }
.grid thead th { height: 26px; padding-top: 2px; font-size: 18px; color: #333; }
.grid thead .on, .grid .sel th { background: #d2d2d2; color: #217346; }
.grid thead .on { border-bottom-color: #5a9b77; }
.grid .sel th { border-right-color: #5a9b77; }
.grid .corner { background: linear-gradient(135deg, #e6e6e6 50%, #b4b4b4 50%) no-repeat 10px 1px / 23px 22px #e6e6e6; }
.grid td { height: 27px; padding: 2px 2px 0; border-right: 1px solid #dedede; border-bottom: 1px solid #dedede; white-space: nowrap; }
.grid tbody th { height: 27px; padding-top: 2px; }
.grid .sel td:nth-child(-n+6) { background: #c6c6c6; border-color: #bababa; }
.grid .sel td.cur { background: #fff; }
.grid .end td:nth-child(-n+6) { border-bottom-color: #4c9169; }
.grid .num { text-align: right; }
.vscroll { width: 9px; display: flex; flex-direction: column; padding: 1px 1px 0 2px; border-left: 1px solid #c9c9c9; background: #e6e6e6; }
.vscroll button { height: 7px; background: #fff; border: 1px solid #c8c8c8; display: flex; align-items: center; justify-content: center; }
.vthumb { flex: 173; background: #fff; border: 1px solid #c2c2c2; }
.vtrack { flex: 144; background: #dcdcdc; }

/* sheet tabs */
.sheetbar { display: flex; align-items: center; height: 12px; border-top: 1px solid #c6c6c6; }
.navs { display: flex; gap: 9px; width: 42px; padding-left: 11px; }
.sheettab { align-self: stretch; background: #fff; color: #217346; font-weight: 700; padding: 0 8px; margin-bottom: 1px; border-bottom: 1px solid #217346; }
.plus { margin: 0 auto 0 14px; }
.hscroll { width: 38%; height: 6px; display: flex; margin: 0 9px 0 2px; }
.hscroll button { width: 7px; background: #fff; border: 1px solid #c2c2c2; display: flex; align-items: center; justify-content: center; }
.hthumb { flex: 218; background: #fff; border: 1px solid #c2c2c2; }
.htrack { flex: 73; background: #dcdcdc; }

/* status bar */
.status { display: flex; align-items: center; height: 9px; background: #f1f1f1; color: #777; padding: 0 3px; }
.rec { margin-left: 8px; }
.mw { margin-left: auto; }
.az { margin-left: 18px; }
.sm { margin: 0 10px 0 7px; }
.view { width: 16px; height: 9px; display: flex; align-items: center; justify-content: center; }
.view.on { background: #cdcdcd; }
.zb { width: 6px; color: #444; font-weight: 700; }
.view + .zb { margin-left: 2px; }
.zoom { appearance: none; width: 42px; height: 7px; background: linear-gradient(#aaa, #aaa) no-repeat center / 100% 1px; }
.zoom::-webkit-slider-thumb { appearance: none; width: 2px; height: 6px; background: #555; }
.pct { margin-left: 4px; }

/* task bar */
.taskbar { display: flex; height: 17px; background: #f0f0f0; color: #222; }
.apps { display: grid; grid-template-columns: repeat(22, 1fr); width: 449px; margin-right: auto; }
.apps button { display: flex; align-items: center; justify-content: center; margin: 0 2px; border-bottom: 1px solid transparent; }
.apps svg { width: 11px; height: 11px; fill: currentColor; }
.apps .run { border-bottom: 1px solid #2f8fe0; }
.apps .hl { background: #fbfbfb; }
.apps .pp { color: #d04423; }
.apps .wd { color: #2b579a; }
.apps .xl { color: #1f7145; }
.apps .ol { color: #1373c8; }
.apps .on16 { color: #80397b; }
.tray { display: flex; align-items: center; gap: 3px; }
.tray svg { width: 7px; height: 7px; }
.clock { padding-top: 1px; text-align: center; width: 36px; }
.notif { width: 18px; display: flex; align-items: center; }

/* chart dialog */
.dialog {
  position: absolute; left: 217px; top: 92px; width: 385px; height: 289px; display: flex; flex-direction: column;
  background: #f0f0f0; border: 1px solid #4a9ade; box-shadow: 0 1px 4px rgba(0, 40, 90, .4); padding: 0 2px 2px 3px;
}
.dhead { display: flex; align-items: center; background: #0078d7; color: #fff; height: 13px; margin: 0 -2px 0 -3px; padding: 0 7px 0 4px; gap: 15px; }
.dhead span { margin-right: auto; }
.dtabs { display: flex; height: 12px; padding-top: 2px; }
.dtabs button { padding: 0 2px; font-weight: 700; color: #555; }
.dtabs .active { background: #fff; color: #333; padding: 0 3px; }
.dbody { flex: 1; min-height: 0; background: #fff; display: flex; padding: 4px 5px 5px 4px; }
.kinds { width: 61px; border-right: 1px solid #d4d4d4; padding-right: 4px; }
.kinds button { display: flex; align-items: center; gap: 5px; width: 100%; height: 10px; padding-left: 2px; color: #777; white-space: nowrap; }
.kinds svg { width: 7px; height: 7px; }
.kinds .active { background: #c6c6c6; color: #333; }
.preview { flex: 1; padding-left: 5px; }
.types { display: flex; border-bottom: 1px solid #d4d4d4; padding-bottom: 2px; }
.types button { width: 23px; height: 23px; display: flex; align-items: center; justify-content: center; }
.types .active { background: #c6c6c6; }
.types svg { width: 17px; height: 17px; }
.preview h2 { font: 6px/14px "Noto Sans", sans-serif; color: #333; }
.charts { display: flex; gap: 3px; align-items: center; }
.chart { width: 90px; background: #fff; border: 1px solid #ececec; }
.chart.active { width: 93px; border: 2px solid #b6b6b6; }
.chart svg { width: 100%; }
.chart path { fill: none; }
.gl { stroke: #dedede; stroke-width: .5; }
.ticks { stroke: #bbb; stroke-width: 1; stroke-dasharray: 1 2.700; }
.c1, .c2, .c3, .c4 { stroke-width: 3; }
.c1 { stroke: #5b9bd5; }
.c2 { stroke: #ed7d31; }
.c3 { stroke: #a5a5a5; }
.c4 { stroke: #ffc000; }
.ct { font-size: 3px; text-anchor: middle; fill: #555; }
.lab, .leg { font-size: 2px; fill: #777; }
.lab { text-anchor: middle; }
.dfoot { display: flex; justify-content: flex-end; gap: 4px; padding-top: 3px; }
.dfoot button { width: 32px; height: 10px; background: #e1e1e1; border: 1px solid #c4c4c4; color: #222; }
.dfoot .ok { border-color: #0078d7; }
```
